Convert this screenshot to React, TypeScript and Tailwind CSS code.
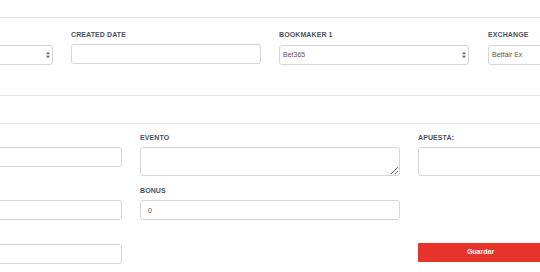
import React from "react";

const label = "block h-[10px] text-[7px] leading-[10px] font-bold uppercase text-[#4a5262] tracking-[0.1px]";
const box =
  "block w-full h-[20px] border border-[#d6d6d6] rounded-[3px] bg-white text-[7px] text-[#555] outline-none";

function SelectField({ title, value }: { title?: string; value: string }) {
  return (
    <div className="flex flex-col gap-[5px]">
      <span className={label}>{title}</span>
      <div className="relative">
        <select className={`${box} appearance-none pl-[3px]`} defaultValue={value}>
          <option>{value}</option>
        </select>
        {/* up/down caret */}
        <svg
          className="absolute right-[3px] top-[6px] pointer-events-none"
          width="4"
          height="8"
          viewBox="0 0 4 8"
        >
          <path d="M0 3.2 L2 0.8 L4 3.2 Z" fill="#666" />
          <path d="M0 4.8 L2 7.2 L4 4.8 Z" fill="#666" />
        </svg>
      </div>
    </div>
  );
}

function InputField({ title, value = "" }: { title?: string; value?: string }) {
  return (
    <div className="flex flex-col gap-[4px]">
      <span className={label}>{title}</span>
      <input className={`${box} px-[7px]`} defaultValue={value} />
    </div>
  );
}

function AreaField({ title }: { title: string }) {
  return (
    <div className="flex flex-col gap-[4px]">
      <span className={label}>{title}</span>
      <textarea className="block w-full h-[29px] border border-[#d6d6d6] rounded-[3px] bg-white text-[7px] outline-none" />
    </div>
  );
}

export default function App() {
  return (
    <div className="w-[540px] h-[272px] overflow-hidden bg-white font-['Liberation_Sans',Arial,sans-serif]">
      <div className="pt-[17px] ml-[-138px] w-[820px]">
        <div className="border-t border-[#e4e4e4]" />

        {/* Top row */}
        <div className="grid grid-cols-[190px_190px_190px_190px] gap-x-[18px] pt-[12px] pl-[1px]">
          <SelectField value="" />
          <InputField title="Created Date" />
          <SelectField title="Bookmaker 1" value="Bet365" />
          <div className="ml-[1px]">
            <SelectField title="Exchange" value="Betfair Ex" />
          </div>
        </div>

        <div className="mt-[30px] border-t border-[#e4e4e4]" />
        <div className="mt-[27px] border-t border-[#e4e4e4]" />

        {/* Bet details */}
        <div className="grid grid-cols-[260px_260px_260px] gap-x-[18px] gap-y-[10px] pt-[9px]">
          <InputField />
          <AreaField title="Evento" />
          <AreaField title="Apuesta:" />

          <InputField />
          <InputField title="Bonus" value="0" />
          <div />

          <InputField />
          <div />
          <div className="pt-[13px]">
            <button className="block w-[125px] h-[19px] bg-[#e8332a] text-white text-[7px] font-bold rounded-[1px]">
              Guardar
            </button>
          </div>
        </div>
      </div>
    </div>
  );
}
